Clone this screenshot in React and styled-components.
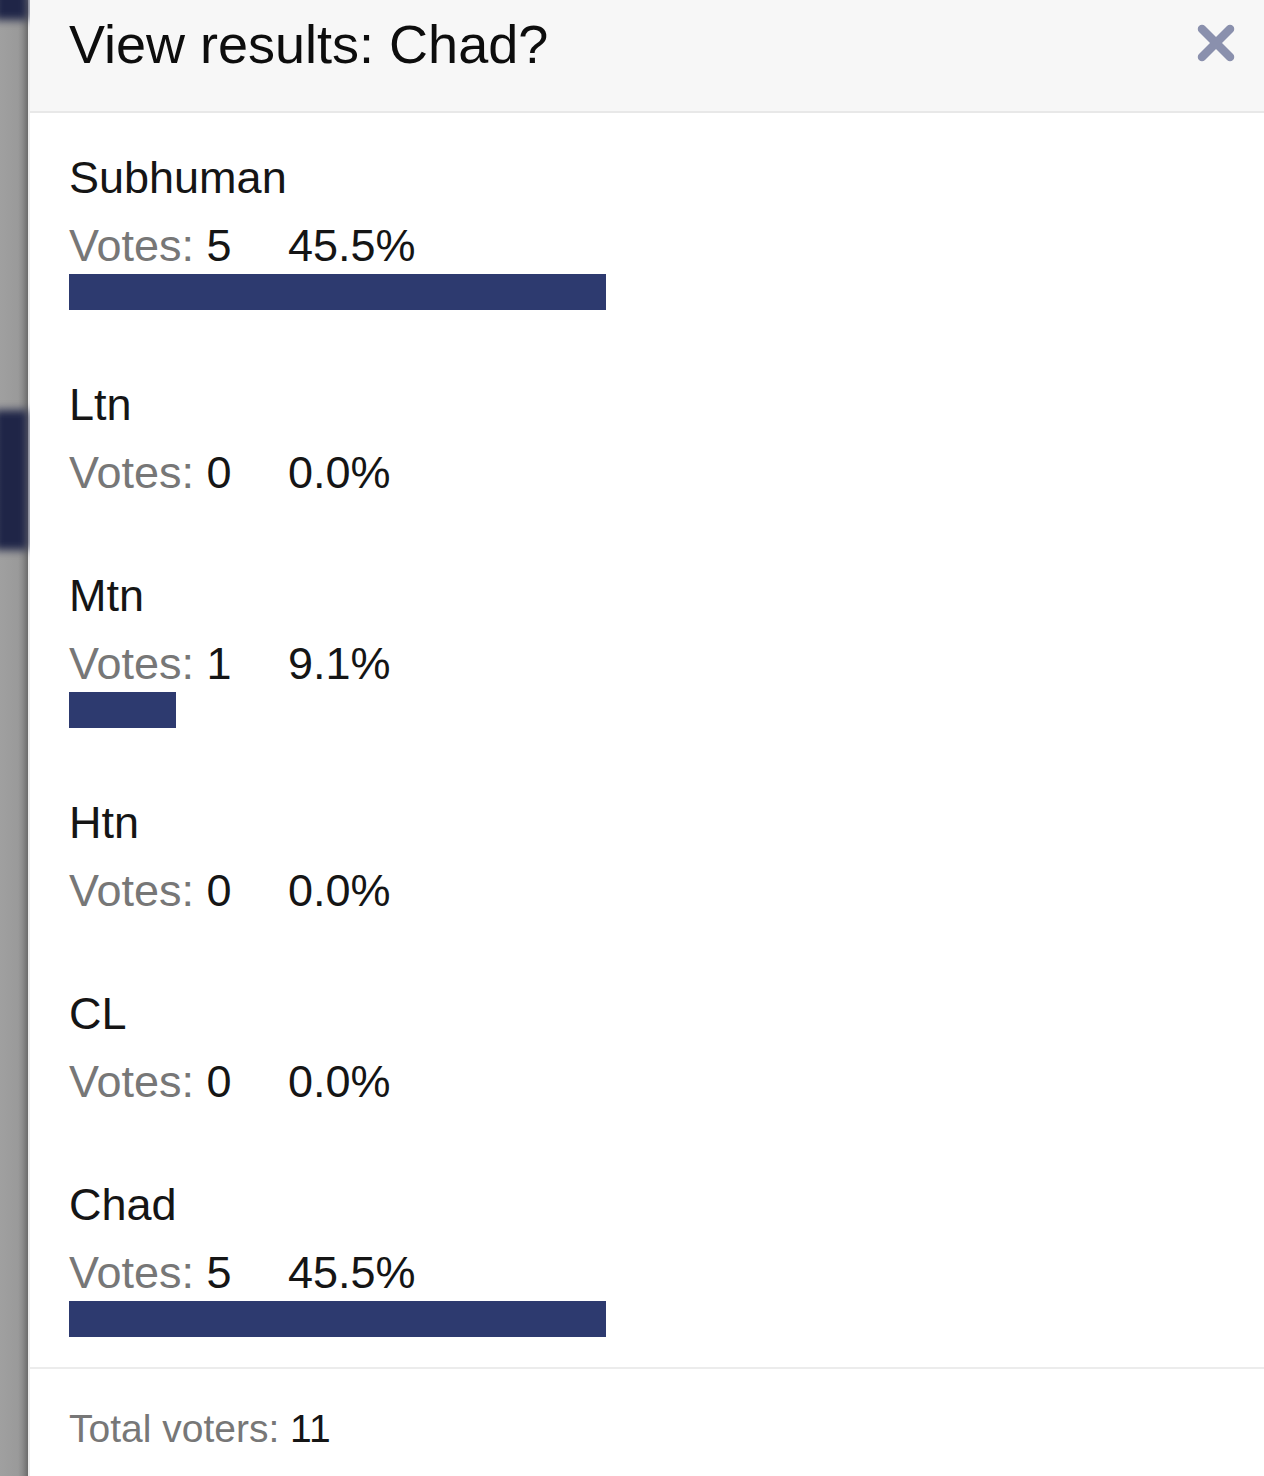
import React from 'react';
import styled, {createGlobalStyle} from "styled-components";

const GlobalStyle = createGlobalStyle`
  html, body {
    margin: 0;
    padding: 0;
    background: #9b9b9b;
  }
  body {
    font-family: "Liberation Sans", Arial, Helvetica, sans-serif;
    -webkit-font-smoothing: antialiased;
  }
`;

const Page = styled.div`
  display: flex;
  min-height: 1476px;
  overflow: hidden;
`;

const Backdrop = styled.div`
  width: 30px;
  flex-shrink: 0;
  display: flex;
  flex-direction: column;
  background: linear-gradient(to right, #a0a0a0 0%, #9a9a9a 60%, #7e7e7e 100%);
  overflow: hidden;
`;

const BlurBlock = styled.div`
  height: ${props => props.$height}px;
  margin-top: ${props => props.$top}px;
  margin-left: -6px;
  margin-right: 2px;
  background: #1f2547;
  filter: blur(4px);
`;

const Modal = styled.div`
  flex: 1;
  display: flex;
  flex-direction: column;
  background: #fff;
  box-shadow: -2px 0 6px rgba(0, 0, 0, 0.25);
  border-left: 2px solid #ececec;
  margin-left: -2px;
`;

const Header = styled.div`
  height: 113px;
  box-sizing: border-box;
  display: flex;
  justify-content: space-between;
  align-items: flex-start;
  padding: 14px 28px 0 39px;
  background: #f7f7f7;
  border-bottom: 2px solid #e8e8e8;
`;

const Title = styled.h1`
  margin: 0;
  font-size: 54px;
  line-height: 60px;
  font-weight: 400;
  color: #0d0d0d;
`;

const CloseButton = styled.button`
  margin-top: 9px;
  padding: 0;
  border: 0;
  background: none;
  width: 40px;
  height: 40px;
  cursor: pointer;
`;

const Body = styled.div`
  display: flex;
  flex-direction: column;
  gap: 67px;
  padding: 37px 14px 30px 39px;
  border-bottom: 2px solid #ececec;
`;

const Option = styled.div`
  display: flex;
  flex-direction: column;
`;

const Label = styled.div`
  font-size: 45px;
  line-height: 56px;
  color: #151515;
`;

const VotesLine = styled.div`
  margin-top: 12px;
  font-size: 45px;
  line-height: 56px;
  color: #151515;
  white-space: nowrap;
`;

const VotesCount = styled.span`
  display: inline-block;
  width: 219px;
`;

const Muted = styled.span`
  color: #777;
`;

const BarTrack = styled.div`
  width: 100%;
`;

const Bar = styled.div`
  height: 36px;
  background: #2d3a6f;
`;

const Footer = styled.div`
  padding: 38px 39px;
  font-size: 39px;
  line-height: 44px;
  color: #151515;
`;

const options = [
    {label: "Subhuman", votes: 5},
    {label: "Ltn", votes: 0},
    {label: "Mtn", votes: 1},
    {label: "Htn", votes: 0},
    {label: "CL", votes: 0},
    {label: "Chad", votes: 5},
];

function CloseIcon() {
    return (
        <svg width="40" height="40" viewBox="0 0 40 40">
            <g stroke="#8a90ad" strokeWidth="8.5" strokeLinecap="round">
                <line x1="6" y1="6" x2="34" y2="34"/>
                <line x1="34" y1="6" x2="6" y2="34"/>
            </g>
        </svg>
    );
}

export default function App() {
    const total = options.reduce((sum, it) => sum + it.votes, 0);

    return (
        <Page>
            <GlobalStyle/>
            <Backdrop>
                <BlurBlock $top={-10} $height={30}/>
                <BlurBlock $top={390} $height={140}/>
            </Backdrop>
            <Modal>
                <Header>
                    <Title>View results: Chad?</Title>
                    <CloseButton aria-label="Close"><CloseIcon/></CloseButton>
                </Header>
                <Body>
                    {options.map(it => {
                        const pct = total ? it.votes / total * 100 : 0;
                        return (
                            <Option key={it.label}>
                                <Label>{it.label}</Label>
                                <VotesLine>
                                    <VotesCount><Muted>Votes:</Muted> {it.votes}</VotesCount>
                                    {pct.toFixed(1)}%
                                </VotesLine>
                                {it.votes > 0 && (
                                    <BarTrack>
                                        <Bar style={{width: `${pct}%`}}/>
                                    </BarTrack>
                                )}
                            </Option>
                        );
                    })}
                </Body>
                <Footer><Muted>Total voters:</Muted> {total}</Footer>
            </Modal>
        </Page>
    );
}
